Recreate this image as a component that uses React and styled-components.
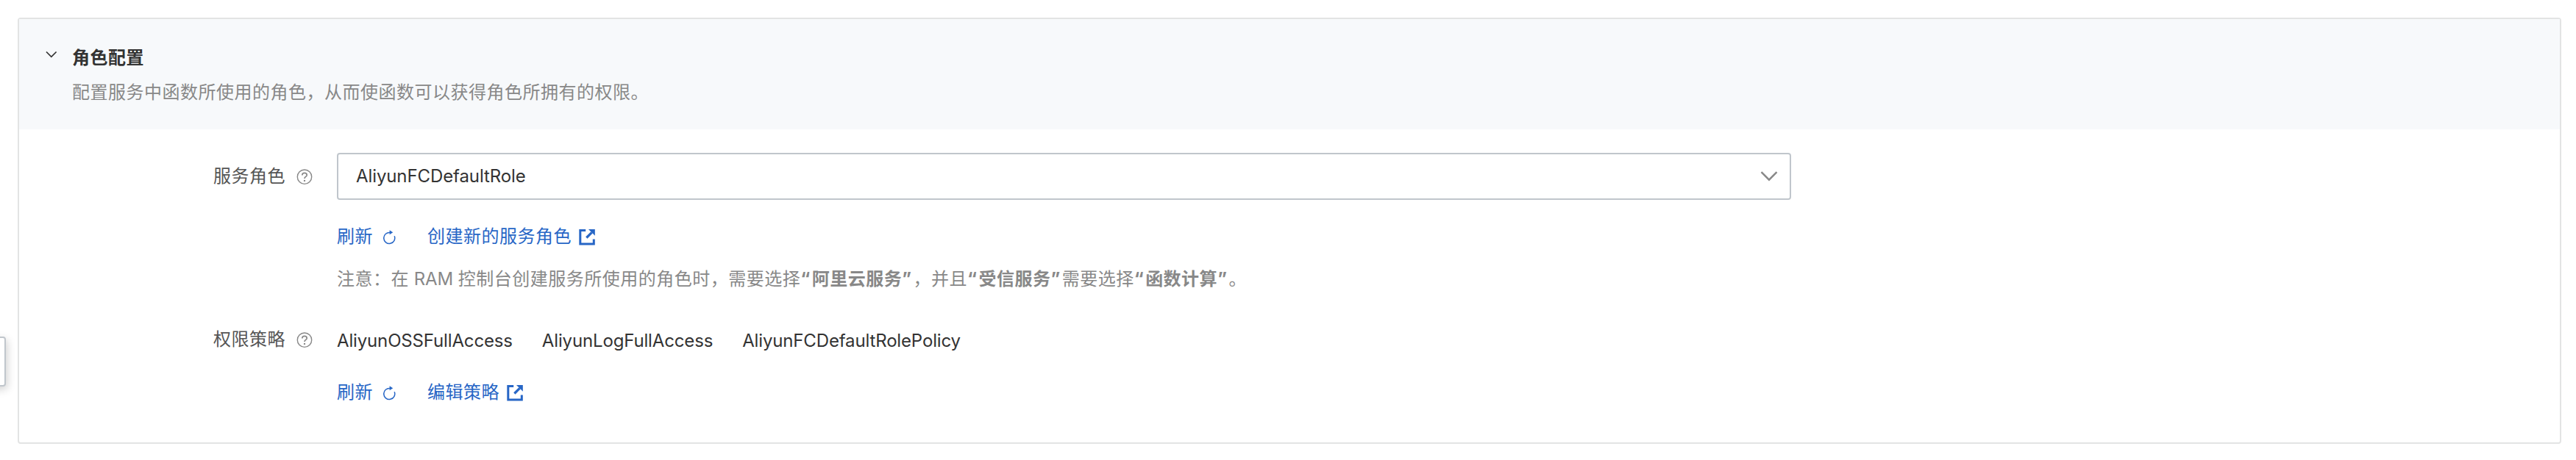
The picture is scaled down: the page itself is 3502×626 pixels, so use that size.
import React from "react";
import styled, { createGlobalStyle } from "styled-components";

const GlobalStyle = createGlobalStyle`
  *, *::before, *::after { box-sizing: border-box; }
  body {
    margin: 0;
    background: #fff;
    font-family: Inter, "Noto Sans CJK SC", sans-serif;
    font-size: 24px;
    line-height: 36px;
    color: #333;
    overflow: hidden;
  }
`;

const Page = styled.main`
  position: relative;
  height: 626px;
  padding: 24px 20px 22px 24px;
`;

const SideHandle = styled.div`
  position: absolute;
  left: -24px;
  top: 458px;
  width: 32px;
  height: 68px;
  border: 2px solid #c0c6cc;
  border-radius: 4px;
  background: #fff;
  box-shadow: 2px 4px 12px rgba(0, 0, 0, 0.18);
`;

const Card = styled.section`
  height: 580px;
  border: 2px solid #e3e4e4;
  border-radius: 4px;
  background: #fff;
`;

const Header = styled.header`
  display: flex;
  height: 150px;
  padding: 35px 0 0 36px;
  background: #f7f9fb;
`;

const HeaderIcon = styled.div`
  width: 36px;
  padding-top: 8px;
`;

const HeaderText = styled.div`
  display: flex;
  flex-direction: column;
  gap: 11px;
  letter-spacing: 0.5px;
  white-space: nowrap;
`;

const Title = styled.h2`
  margin: 0;
  font-size: 24px;
  line-height: 36px;
  font-weight: 700;
`;

const Description = styled.p`
  margin: 0;
  color: #888;
  font-weight: 400;
`;

const Body = styled.div`
  padding-top: 32px;
`;

const FormRow = styled.div`
  display: flex;
  height: ${(p) => p.$height}px;
`;

const Label = styled.div`
  display: flex;
  align-items: center;
  gap: 15px;
  width: 432px;
  height: ${(p) => p.$height}px;
  padding-left: 264px;
  color: #555;
  letter-spacing: 0.5px;
  white-space: nowrap;
`;

const Field = styled.div`
  display: flex;
  flex-direction: column;
`;

const Select = styled.div`
  display: flex;
  align-items: center;
  justify-content: space-between;
  width: 1977px;
  height: 64px;
  padding: 0 16px 0 24px;
  border: 2px solid #c0c6cc;
  border-radius: 4px;
  letter-spacing: -0.1px;
`;

const Links = styled.div`
  display: flex;
  gap: 43px;
  height: 36px;
  margin-top: ${(p) => p.$top}px;
`;

const Link = styled.a`
  display: flex;
  align-items: center;
  gap: ${(p) => p.$gap}px;
  color: #2766c6;
  letter-spacing: 0.5px;
  white-space: nowrap;
`;

const Note = styled.p`
  margin: 22px 0 0;
  color: #888;
  letter-spacing: 0.5px;
  white-space: nowrap;
`;

const Latin = styled.span`
  letter-spacing: -0.1px;
`;

const Mark = styled.span`
  letter-spacing: 2.5px;
`;

const Policies = styled.div`
  display: flex;
  align-items: center;
  gap: 40px;
  height: 36px;
  padding-top: 3px;
`;

const Policy = styled.span`
  letter-spacing: -0.15px;
  white-space: nowrap;
`;

const Icon = styled.svg`
  display: block;
  flex: none;
  margin-top: ${(p) => p.$drop || 0}px;
`;

const HelpIcon = () => (
  <Icon $drop={2} width="22" height="22" viewBox="0 0 22 22" fill="none" stroke="#888" strokeWidth="1.4">
    <circle cx="11" cy="10.7" r="9.7" />
    <path d="M7.8 8.4C7.8 6.5 9.2 5.4 11 5.4s3.2 1.1 3.2 2.8c0 2.2-3.2 2.3-3.2 4.8" strokeWidth="1.7" />
    <circle cx="11" cy="15.9" r="1.2" fill="#888" stroke="none" />
  </Icon>
);

const RefreshIcon = () => (
  <Icon $drop={2} width="17" height="20" viewBox="0 0 17 20" fill="none" stroke="#2766c6" strokeWidth="1.5">
    <path d="M15.2 8.2A7.5 7.5 0 1 1 9.5 3.6" />
    <path d="M8.6 0.2L13.2 3.2L8.6 6.2z" fill="#2766c6" stroke="none" />
  </Icon>
);

const ExternalIcon = () => (
  <Icon $drop={2} width="22" height="22" viewBox="0 0 22 22" fill="none" stroke="#2766c6" strokeWidth="3">
    <path d="M9.2 1.5H1.8V20H20.3V13.6" />
    <path d="M10.3 11.5L17.5 4.3" strokeWidth="3.2" />
    <path d="M13 0H21.8V8.8z" fill="#2766c6" stroke="none" />
  </Icon>
);

const LinkGroup = ({ top, action }) => (
  <Links $top={top}>
    <Link $gap={14}>刷新<RefreshIcon /></Link>
    <Link $gap={10}>{action}<ExternalIcon /></Link>
  </Links>
);

const Quoted = ({ children }) => (
  <b><Mark>“</Mark>{children}<Mark>”</Mark></b>
);

export default function App() {
  return (
    <>
      <GlobalStyle />
      <Page>
        <SideHandle />
        <Card>
          <Header>
            <HeaderIcon>
              <Icon width="16" height="10" viewBox="0 0 16 10" fill="none" stroke="#333" strokeWidth="1.7">
                <path d="M1 1.5L7.8 8.3L14.6 1.5" />
              </Icon>
            </HeaderIcon>
            <HeaderText>
              <Title>角色配置</Title>
              <Description>配置服务中函数所使用的角色，从而使函数可以获得角色所拥有的权限。</Description>
            </HeaderText>
          </Header>
          <Body>
            <FormRow $height={236}>
              <Label $height={64}>服务角色<HelpIcon /></Label>
              <Field>
                <Select>
                  AliyunFCDefaultRole
                  <Icon width="24" height="14" viewBox="0 0 24 14" fill="none" stroke="#888" strokeWidth="2.4">
                    <path d="M1.5 1.2L12 11.7L22.5 1.2" />
                  </Icon>
                </Select>
                <LinkGroup top={32} action="创建新的服务角色" />
                <Note>
                  注意：在<Latin> RAM </Latin>控制台创建服务所使用的角色时，需要选择<Quoted>阿里云服务</Quoted>，并且<Quoted>受信服务</Quoted>需要选择<Quoted>函数计算</Quoted>。
                </Note>
              </Field>
            </FormRow>
            <FormRow $height={120}>
              <Label $height={36}>权限策略<HelpIcon /></Label>
              <Field>
                <Policies>
                  <Policy>AliyunOSSFullAccess</Policy>
                  <Policy>AliyunLogFullAccess</Policy>
                  <Policy>AliyunFCDefaultRolePolicy</Policy>
                </Policies>
                <LinkGroup top={36} action="编辑策略" />
              </Field>
            </FormRow>
          </Body>
        </Card>
      </Page>
    </>
  );
}
